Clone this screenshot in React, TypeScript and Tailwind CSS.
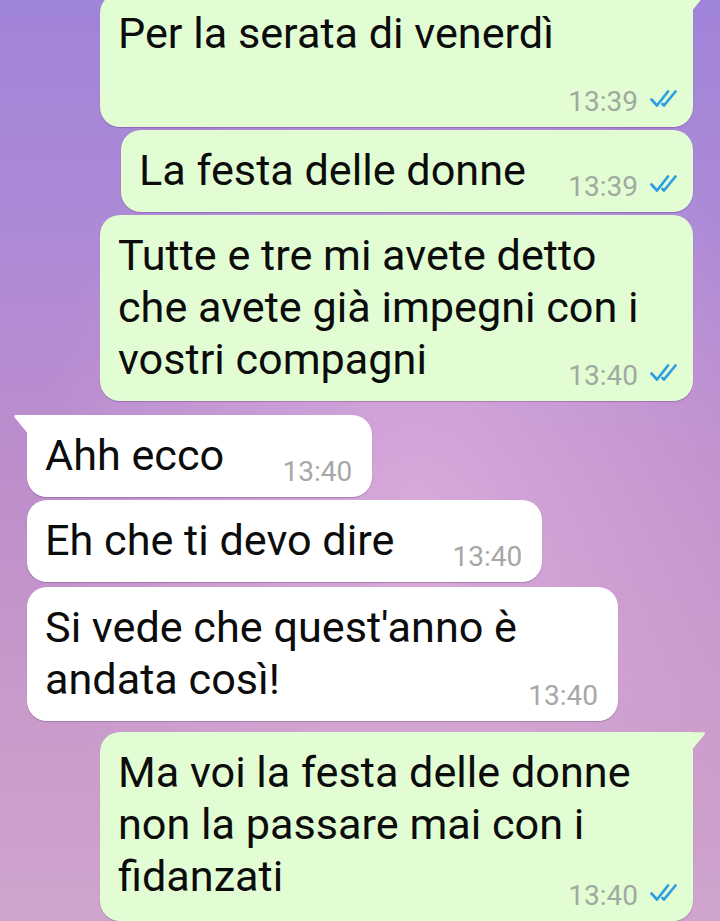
import React from 'react';

function Ticks(): JSX.Element {
  return (
    <svg width="30" height="18" viewBox="0 0 30 18" fill="none" className="mt-[1px] shrink-0">
      <path d="M2.5 10.5 L8 16.5 L19 2.5" stroke="#2c9fe2" strokeWidth="2.7" strokeLinecap="round" strokeLinejoin="round" />
      <path d="M13.5 15 L15 16.5 L26.5 2.5" stroke="#2c9fe2" strokeWidth="2.7" strokeLinecap="round" strokeLinejoin="round" />
    </svg>
  );
}

interface BubbleProps {
  out?: boolean;
  tail?: boolean;
  time: string;
  className?: string;
  children: React.ReactNode;
}

function Bubble({ out, tail, time, className, children }: BubbleProps): JSX.Element {
  if (out) {
    return (
      <div
        className={`relative self-end max-w-[593px] bg-[#e2fdd3] rounded-[20px] ${tail ? 'rounded-tr-none' : ''} pl-[18px] pr-[14px] py-[15px] shadow-[0_1px_1px_rgba(60,20,80,0.25)] ${className ?? ''}`}
      >
        {tail && (
          <svg width="13" height="17" viewBox="0 0 14 18" className="absolute top-0 left-full">
            <path d="M0 0 H11 Q14 0 12.3 2.6 L0 17.5 Z" fill="#e2fdd3" />
          </svg>
        )}
        <p>
          {children}
          <span className="inline-block w-[148px]" />
        </p>
        <div className="absolute bottom-[11px] right-[14px] flex items-start gap-[11px] text-[28px] leading-none text-[#a0aaa0]">
          <span>{time}</span>
          <Ticks />
        </div>
      </div>
    );
  }
  return (
    <div
      className={`relative self-start max-w-[593px] bg-white rounded-[20px] ${tail ? 'rounded-tl-none' : ''} pl-[18px] pr-[20px] py-[15px] shadow-[0_1px_1px_rgba(60,20,80,0.25)] ${className ?? ''}`}
    >
      {tail && (
        <svg width="14" height="18" viewBox="0 0 14 18" className="absolute top-0 right-full">
          <path d="M14 0 H3 Q0 0 1.7 2.6 L14 17.5 Z" fill="#ffffff" />
        </svg>
      )}
      <p>
        {children}
        <span className="inline-block w-[128px]" />
      </p>
      <div className="absolute bottom-[11px] right-[20px] text-[28px] leading-none text-[#a7a7a7]">
        {time}
      </div>
    </div>
  );
}

export default function App(): JSX.Element {
  return (
    <div className="w-full h-[921px] overflow-hidden font-[Roboto,sans-serif] text-[43.2px] leading-[52px] text-[#0c0c0c] bg-[radial-gradient(ellipse_at_58%_55%,rgba(232,186,228,0.6),transparent_65%),linear-gradient(180deg,#a084d9_0%,#ad8ad6_25%,#bd8dcc_50%,#c899ca_75%,#cfa5cd_100%)]">
      <div className="flex flex-col px-[27px] -mt-[7px]">
        <Bubble out tail time="13:39" className="w-[593px]">
          Per la serata di venerdì
          <br />
        </Bubble>
        <Bubble out time="13:39" className="mt-[3px] w-[572px]">
          La festa delle donne
        </Bubble>
        <Bubble out time="13:40" className="mt-[3px] w-[593px]">
          Tutte e tre mi avete detto
          <br />
          che avete già impegni con i
          <br />
          vostri compagni
        </Bubble>

        <Bubble tail time="13:40" className="mt-[14px]">
          Ahh ecco
        </Bubble>
        <Bubble time="13:40" className="mt-[3px]">
          Eh che ti devo dire
        </Bubble>
        <Bubble time="13:40" className="mt-[5px] w-[591px]">
          Si vede che quest'anno è
          <br />
          andata così!
        </Bubble>

        <Bubble out tail time="13:40" className="mt-[11px] w-[593px] pb-[18px]">
          Ma voi la festa delle donne
          <br />
          non la passare mai con i
          <br />
          fidanzati
        </Bubble>
      </div>
    </div>
  );
}
